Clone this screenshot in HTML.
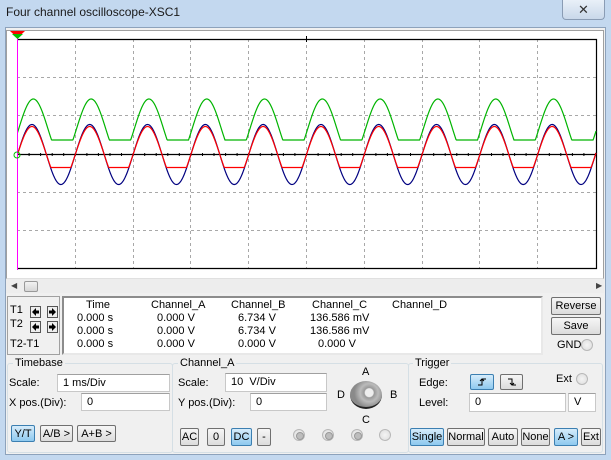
<!DOCTYPE html>
<html><head><meta charset="utf-8"><style>
*{margin:0;padding:0;box-sizing:border-box}
body{width:611px;height:460px;overflow:hidden;background:#c3d8ef;font-family:"Liberation Sans",sans-serif;font-size:11px;color:#000;position:relative}
.a{position:absolute;white-space:nowrap}
.body{position:absolute;left:5px;top:27px;width:601px;height:428px;background:#f0f0f0;border:1px solid #8da2bb}
.inp{position:absolute;background:#fff;border:1px solid #c8c8c8;border-top-color:#a0a0a0;padding-left:5px;line-height:16px}
.btn{position:absolute;border:1px solid #707070;border-radius:2px;background:linear-gradient(#f6f6f6,#dcdcdc);text-align:center;line-height:16px}
.blu{background:linear-gradient(#d6ecfb,#8ec9ef);border-color:#3c7fb1}
.grp{position:absolute;border:1px solid #d5dfe5;border-radius:3px}
.rad{position:absolute;width:12px;height:12px;border-radius:50%;border:1px solid #b8b8b8;background:radial-gradient(#f4f4f4,#dcdcdc)}
.rad.d:after{content:"";position:absolute;left:2px;top:2px;width:6px;height:6px;border-radius:50%;background:#bdbdbd;border:1px solid #999}
.arr{position:absolute;width:11px;height:12px;border:1px solid #555;background:#eee}
</style></head><body>
<div class="a" style="left:6px;top:5px;font-size:12px;color:#1a1a1a">Four channel oscilloscope-XSC1</div>
<div class="a" style="left:562px;top:0;width:43px;height:20px;border:1px solid #8a9cb4;border-top:none;border-radius:0 0 4px 4px;background:linear-gradient(#e9f0f8,#c9d8ea);text-align:center;font-size:13px;line-height:19px;color:#333">✕</div>
<div class="body"></div>
<div class="a" style="left:6px;top:30px;width:598px;height:249px;background:#fff;border:1px solid #a0a0a0;border-bottom-color:#e0e0e0"></div>
<svg class="a" style="left:0;top:0" width="611" height="300">
<g stroke="#a8a8a8" stroke-dasharray="3,3" stroke-width="1">
<path d="M75.5 39V268M133.5 39V268M190.5 39V268M248.5 39V268M306.5 39V268M364.5 39V268M422.5 39V268M479.5 39V268M537.5 39V268"/>
<path d="M17 77.5H596M17 115.5H596M17 192.5H596M17 230.5H596"/>
</g>
<path d="M17 39.5H596.5V268.5H17.5" fill="none" stroke="#000" stroke-width="1.2"/>
<line x1="306.5" y1="36" x2="306.5" y2="42" stroke="#000"/>
<line x1="17" y1="154.5" x2="597" y2="154.5" stroke="#000" stroke-width="1.3"/>
<path id="ticks" stroke="#000" d=""/>
<path id="g" fill="none" stroke="#00b400" stroke-width="1.2"/>
<path id="b" fill="none" stroke="#000080" stroke-width="1.2"/>
<path id="r" fill="none" stroke="#ff0000" stroke-width="1.2"/>
<line x1="17.5" y1="33" x2="17.5" y2="270" stroke="#ff00ff"/>
<path d="M10 31H25L17.5 38Z" fill="#ff0000"/><path d="M12 34H23L17.5 39Z" fill="#00c000"/>
<circle cx="17" cy="155" r="3" fill="none" stroke="#00c000"/>
</svg>
<script>
(function(){var x0=17.5,P=57.8,g="",b="",r="",t="";
for(var x=17.5;x<=596;x+=0.5){var th=(x-x0)/P*2*Math.PI,s=Math.sin(th);
b+=(b?"L":"M")+x+" "+(154.5-30*s).toFixed(2);
var rv=154.5-28*s;if(rv>167.5)rv=167.5;r+=(r?"L":"M")+x+" "+rv.toFixed(2);
var gs=Math.sin(th-0.15),gv=140-41*Math.max(0,(gs+0.4)/1.4);g+=(g?"L":"M")+x+" "+gv.toFixed(2);}
for(var x=17.5;x<596;x+=11.56){t+="M"+x.toFixed(1)+" 153V156";}
document.getElementById("b").setAttribute("d",b);document.getElementById("r").setAttribute("d",r);
document.getElementById("g").setAttribute("d",g);document.getElementById("ticks").setAttribute("d",t);})();
</script>
<div class="a" style="left:6px;top:279px;width:598px;height:14px;background:#ededed"></div>
<div class="a" style="left:11px;top:281px;font-size:8px;color:#444">◀</div>
<div class="a" style="left:24px;top:281px;width:14px;height:11px;border:1px solid #999;border-radius:2px;background:linear-gradient(#f2f2f2,#d6d6d6)"></div>
<div class="a" style="left:596px;top:281px;font-size:8px;color:#444">▶</div>
<div class="a" style="left:7px;top:296px;width:53px;height:59px;border:1px solid #a0a0a0;background:#f0f0f0"></div>
<div class="a" style="left:10px;top:304px">T1</div>
<div class="a" style="left:10px;top:318px">T2</div>
<div class="a" style="left:10px;top:338px">T2-T1</div>
<svg class="a" style="left:30px;top:306px" width="28" height="28">
<g fill="#eee" stroke="#555"><rect x="0.5" y="0.5" width="10" height="11"/><rect x="17.5" y="0.5" width="10" height="11"/><rect x="0.5" y="15.5" width="10" height="11"/><rect x="17.5" y="15.5" width="10" height="11"/></g>
<g fill="#000"><path d="M2 6L6 2V4.5H9V7.5H6V10Z"/><path d="M26 6L22 2V4.5H19V7.5H22V10Z"/><path d="M2 21L6 17V19.5H9V22.5H6V25Z"/><path d="M26 21L22 17V19.5H19V22.5H22V25Z"/></g>
</svg>
<div class="a" style="left:62px;top:296px;width:481px;height:59px;background:#fff;border:2px solid #8c8c8c;border-right-color:#e8e8e8;border-bottom-color:#e8e8e8"></div>
<div class="a" style="left:86px;top:299px">Time</div>
<div class="a" style="left:151px;top:299px">Channel_A</div>
<div class="a" style="left:231px;top:299px">Channel_B</div>
<div class="a" style="left:312px;top:299px">Channel_C</div>
<div class="a" style="left:392px;top:299px">Channel_D</div>
<div class="a" style="left:77px;top:312px">0.000 s</div><div class="a" style="left:157px;top:312px">0.000 V</div><div class="a" style="left:238px;top:312px">6.734 V</div><div class="a" style="left:310px;top:312px">136.586 mV</div>
<div class="a" style="left:77px;top:325px">0.000 s</div><div class="a" style="left:157px;top:325px">0.000 V</div><div class="a" style="left:238px;top:325px">6.734 V</div><div class="a" style="left:310px;top:325px">136.586 mV</div>
<div class="a" style="left:77px;top:338px">0.000 s</div><div class="a" style="left:157px;top:338px">0.000 V</div><div class="a" style="left:238px;top:338px">0.000 V</div><div class="a" style="left:318px;top:338px">0.000 V</div>
<div class="btn" style="left:551px;top:297px;width:50px;height:18px">Reverse</div>
<div class="btn" style="left:551px;top:317px;width:50px;height:18px">Save</div>
<div class="a" style="left:557px;top:339px">GND</div><div class="rad" style="left:581px;top:339px"></div>
<div class="grp" style="left:7px;top:363px;width:166px;height:90px"></div>
<div class="grp" style="left:172px;top:363px;width:237px;height:90px"></div>
<div class="grp" style="left:408px;top:363px;width:195px;height:90px"></div>
<div class="a" style="left:13px;top:357px;background:#f0f0f0;padding:0 2px">Timebase</div>
<div class="a" style="left:178px;top:357px;background:#f0f0f0;padding:0 2px">Channel_A</div>
<div class="a" style="left:413px;top:357px;background:#f0f0f0;padding:0 2px">Trigger</div>
<div class="a" style="left:9px;top:377px">Scale:</div>
<div class="inp" style="left:57px;top:374px;width:113px;height:18px">1 ms/Div</div>
<div class="a" style="left:9px;top:397px">X pos.(Div):</div>
<div class="inp" style="left:81px;top:393px;width:89px;height:18px">0</div>
<div class="btn blu" style="left:11px;top:425px;width:24px;height:17px">Y/T</div>
<div class="btn" style="left:40px;top:425px;width:33px;height:17px">A/B &gt;</div>
<div class="btn" style="left:77px;top:425px;width:39px;height:17px">A+B &gt;</div>
<div class="a" style="left:178px;top:377px">Scale:</div>
<div class="inp" style="left:225px;top:373px;width:102px;height:19px">10 &nbsp;V/Div</div>
<div class="a" style="left:178px;top:397px">Y pos.(Div):</div>
<div class="inp" style="left:250px;top:393px;width:77px;height:18px">0</div>
<div class="a" style="left:362px;top:366px">A</div><div class="a" style="left:337px;top:389px">D</div>
<div class="a" style="left:390px;top:389px">B</div><div class="a" style="left:362px;top:414px">C</div>
<div class="a" style="left:350px;top:381px;width:32px;height:28px;border-radius:50%;background:radial-gradient(circle at 60% 45%,#eee 0,#eee 4px,#999 5px,#bbb 9px,#8a8a8a 15px);border-bottom:2px solid #222"></div>
<div class="btn" style="left:180px;top:428px;width:19px;height:18px">AC</div>
<div class="btn" style="left:207px;top:428px;width:18px;height:18px">0</div>
<div class="btn blu" style="left:231px;top:428px;width:21px;height:18px">DC</div>
<div class="btn" style="left:257px;top:428px;width:14px;height:18px">-</div>
<div class="rad d" style="left:293px;top:429px"></div><div class="rad d" style="left:322px;top:429px"></div>
<div class="rad d" style="left:351px;top:429px"></div><div class="rad" style="left:379px;top:429px"></div>
<div class="a" style="left:419px;top:377px">Edge:</div>
<div class="btn blu" style="left:470px;top:374px;width:24px;height:16px"></div>
<div class="btn" style="left:500px;top:374px;width:23px;height:16px"></div>
<svg class="a" style="left:470px;top:374px" width="54" height="16"><path d="M8 11H12V5H16M12 5L10 7M12 5L14 7" fill="none" stroke="#000"/><path d="M38 5H42V11H46M42 11L40 9M42 11L44 9" fill="none" stroke="#000"/></svg>
<div class="a" style="left:556px;top:373px">Ext</div><div class="rad" style="left:576px;top:373px"></div>
<div class="a" style="left:419px;top:397px">Level:</div>
<div class="inp" style="left:469px;top:393px;width:97px;height:19px">0</div>
<div class="inp" style="left:568px;top:393px;width:28px;height:19px">V</div>
<div class="btn blu" style="left:410px;top:428px;width:34px;height:18px">Single</div>
<div class="btn" style="left:447px;top:428px;width:38px;height:18px">Normal</div>
<div class="btn" style="left:488px;top:428px;width:30px;height:18px">Auto</div>
<div class="btn" style="left:521px;top:428px;width:29px;height:18px">None</div>
<div class="btn blu" style="left:554px;top:428px;width:24px;height:18px">A &gt;</div>
<div class="btn" style="left:581px;top:428px;width:20px;height:18px">Ext</div>
</body></html>
